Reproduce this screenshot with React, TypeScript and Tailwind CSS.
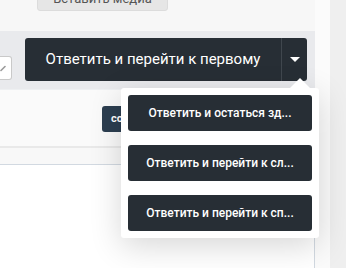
const POPUP_ACTIONS = [
  'Ответить и остаться зд...',
  'Ответить и перейти к сл...',
  'Ответить и перейти к сп...',
];

function Caret() {
  return (
    <svg width="10" height="5" viewBox="0 0 10 5" className="block">
      <path d="M0 0h10L5 5z" fill="#fff" />
    </svg>
  );
}

function ReplyMenu() {
  return (
    <div className="absolute left-[121px] top-[88px] w-[198px] bg-white rounded-[3px] shadow-[0_8px_32px_rgba(0,0,0,0.16)] p-[7px] flex flex-col gap-[14px]">
      <span className="absolute -top-[10px] left-[169px] w-0 h-0 border-l-[10px] border-r-[10px] border-b-[10px] border-l-transparent border-r-transparent border-b-white" />
      {POPUP_ACTIONS.map((label, i) => (
        <button
          key={i}
          className="h-[36px] w-full rounded-[3px] bg-[#272e35] text-white text-[12px] font-medium flex items-center justify-center whitespace-nowrap"
        >
          {label}
        </button>
      ))}
    </div>
  );
}

export default function App() {
  return (
    <div className="relative w-[346px] h-[268px] overflow-hidden flex font-['Roboto','Liberation_Sans',sans-serif]">
      <div className="w-[315px] flex flex-col">
        <div className="h-[31px] bg-[#f7f7f7] pl-[37px]">
          <div className="-mt-[13px] w-[131px] h-[24px] bg-[#e6e6e6] border border-[#dcdcdc] rounded-[3px] text-[13px] text-[#555] flex items-center justify-center">
            Вставить медиа
          </div>
        </div>

        <div className="h-[59px] bg-[#e9eaed] border-b border-[#eef0f2] flex items-start pt-[7px]">
          <div className="mt-[18px] w-[12px] h-[24px] bg-white border border-l-0 border-[#c9c9c9] rounded-r-[3px] overflow-hidden">
            <svg width="12" height="24" viewBox="0 0 12 24" className="block">
              <path d="M1 13.5L5 9.5" stroke="#9a9a9a" strokeWidth="1.6" strokeLinecap="round" />
            </svg>
          </div>
          <div className="ml-[13px] w-[282px] h-[43px] rounded-[3px] bg-[#272e35] flex">
            <div className="w-[257px] border-r border-[#40474e] flex items-center justify-center text-white text-[15px]">
              Ответить и перейти к первому
            </div>
            <div className="flex-1 flex items-center justify-center">
              <Caret />
            </div>
          </div>
        </div>

        <div className="h-[58px] bg-[#fafafa] border-b-2 border-[#e9e9e9] pl-[102px] pt-[16px]">
          <div className="h-[26px] w-[90px] rounded-[3px] bg-[#2c3e50] text-white text-[11px] font-bold pl-[9px] flex items-center">
            сохранить
          </div>
        </div>

        <div className="h-[16px] bg-[#f8f8f8]" />

        <div className="flex-1 bg-white border-t border-r border-[#d2d9e1]" />
      </div>

      <div className="w-[15px] bg-[#fbfbfb]" />
      <div className="flex-1 bg-[#efefef]" />

      <ReplyMenu />
    </div>
  );
}
